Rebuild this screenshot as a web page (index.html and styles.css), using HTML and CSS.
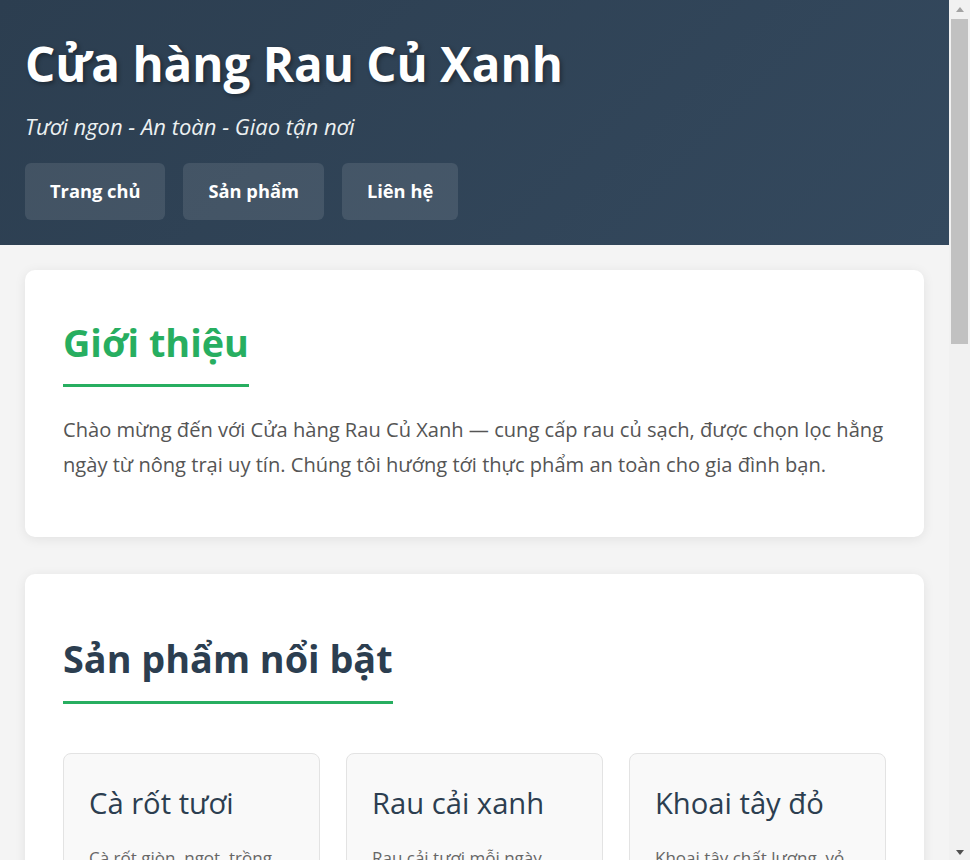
FILE: index.html
```html
<!DOCTYPE html>
<html lang="vi">
<head>
<meta charset="utf-8">
<title>Cửa hàng Rau Củ Xanh</title>
<link rel="stylesheet" href="styles.css">
</head>
<body>
<div class="page">
<header class="site-header">
  <h1 class="site-title">Cửa hàng Rau Củ Xanh</h1>
  <p class="tagline">Tươi ngon - An toàn - Giao tận nơi</p>
  <nav class="nav">
    <a class="nav-link" href="#">Trang chủ</a>
    <a class="nav-link" href="#">Sản phẩm</a>
    <a class="nav-link" href="#">Liên hệ</a>
  </nav>
</header>
<main class="content">
  <section class="card intro">
    <h2 class="section-title green">Giới thiệu</h2>
    <p class="lead">Chào mừng đến với Cửa hàng Rau Củ Xanh — cung cấp rau củ sạch, được chọn lọc hằng ngày từ nông trại uy tín. Chúng tôi hướng tới thực phẩm an toàn cho gia đình bạn.</p>
  </section>
  <section class="card products">
    <h2 class="section-title">Sản phẩm nổi bật</h2>
    <div class="product-grid">
      <article class="product">
        <h3 class="product-name">Cà rốt tươi</h3>
        <p class="product-desc">Cà rốt giòn, ngọt, trồng theo tiêu chuẩn VietGAP, giàu vitamin A.</p>
        <p class="price">25.000đ / kg</p>
        <a class="buy" href="#">Thêm vào giỏ</a>
      </article>
      <article class="product">
        <h3 class="product-name">Rau cải xanh</h3>
        <p class="product-desc">Rau cải tươi mỗi ngày, không thuốc trừ sâu, thu hoạch buổi sáng.</p>
        <p class="price">18.000đ / bó</p>
        <a class="buy" href="#">Thêm vào giỏ</a>
      </article>
      <article class="product">
        <h3 class="product-name">Khoai tây đỏ</h3>
        <p class="product-desc">Khoai tây chất lượng, vỏ mỏng, bở thơm, thích hợp chiên và nấu canh.</p>
        <p class="price">30.000đ / kg</p>
        <a class="buy" href="#">Thêm vào giỏ</a>
      </article>
      <article class="product">
        <h3 class="product-name">Cà chua bi</h3>
        <p class="product-desc">Cà chua bi đỏ mọng, vị chua ngọt tự nhiên, ăn sống hoặc làm salad.</p>
        <p class="price">35.000đ / kg</p>
        <a class="buy" href="#">Thêm vào giỏ</a>
      </article>
      <article class="product">
        <h3 class="product-name">Bắp cải</h3>
        <p class="product-desc">Bắp cải Đà Lạt cuốn chặt, lá giòn, thích hợp luộc, xào và muối dưa.</p>
        <p class="price">20.000đ / kg</p>
        <a class="buy" href="#">Thêm vào giỏ</a>
      </article>
      <article class="product">
        <h3 class="product-name">Dưa leo</h3>
        <p class="product-desc">Dưa leo xanh mát, giòn ngọt, được thu hái trong ngày từ nông trại.</p>
        <p class="price">15.000đ / kg</p>
        <a class="buy" href="#">Thêm vào giỏ</a>
      </article>
    </div>
  </section>
  <section class="card contact">
    <h2 class="section-title green">Liên hệ</h2>
    <p class="lead">Địa chỉ: 123 Đường Nông Sản, Quận 1, TP. Hồ Chí Minh</p>
    <p class="lead">Điện thoại: 0901 234 567</p>
    <p class="lead">Email: lienhe@raucuxanh.vn</p>
  </section>
</main>
<footer class="site-footer">
  <p>© 2024 Cửa hàng Rau Củ Xanh. Bảo lưu mọi quyền.</p>
</footer>
</div>
<div class="scrollbar" aria-hidden="true">
  <span class="sb-btn"><span class="sb-arrow up"></span></span>
  <span class="sb-thumb"></span>
  <span class="sb-space"></span>
  <span class="sb-btn"><span class="sb-arrow down"></span></span>
</div>
</body>
</html>
```
FILE: styles.css
```css
* { box-sizing: border-box; }
body {
  margin: 0;
  background: #f4f4f4;
  font-family: "Open Sans", "Noto Sans", sans-serif;
  color: #333;
}
.page {
  margin-right: 21px;
}
.scrollbar {
  position: fixed;
  top: 0;
  right: 0;
  width: 21px;
  height: 100vh;
  background: #f1f1f1;
  display: flex;
  flex-direction: column;
  align-items: center;
  z-index: 10;
}
.sb-btn {
  height: 19px;
  width: 21px;
  display: flex;
  align-items: center;
  justify-content: center;
  flex: none;
}
.sb-arrow {
  width: 0;
  height: 0;
  border-left: 4.5px solid transparent;
  border-right: 4.5px solid transparent;
}
.sb-arrow.up { border-bottom: 5px solid #a3a3a3; margin-top: -1px; }
.sb-arrow.down { border-top: 5px solid #505050; margin-top: 3px; }
.sb-thumb {
  width: 17px;
  height: 325px;
  background: #c1c1c1;
  flex: none;
}
.sb-space { flex: 1; }
.site-header {
  background: linear-gradient(135deg, #2c3e50 0%, #34495e 100%);
  color: #fff;
  padding: 32px 25px 25px;
}
.site-title {
  margin: 0;
  font-size: 47.5px;
  line-height: 64px;
  font-weight: 700;
  text-shadow: 2px 2px 4px rgba(0,0,0,0.35);
}
.tagline {
  margin: 16px 0 0;
  font-size: 22px;
  line-height: 28px;
  font-style: italic;
  color: #ecf0f1;
}
.nav {
  display: flex;
  gap: 18px;
  margin-top: 23px;
}
.nav-link {
  display: block;
  padding: 16px 25px 17px;
  background: rgba(255,255,255,0.1);
  border-radius: 6px;
  color: #fff;
  text-decoration: none;
  font-weight: 700;
  font-size: 18.3px;
  line-height: 24px;
}
.content {
  padding: 25px;
}
.card {
  background: #fff;
  border-radius: 10px;
  box-shadow: 0 2px 12px rgba(0,0,0,0.08);
  padding: 38px;
  margin-bottom: 37px;
}
.section-title {
  display: inline-block;
  margin: 9px 0 0;
  padding-bottom: 15px;
  border-bottom: 3px solid #27ae60;
  font-size: 37.8px;
  line-height: 52px;
  font-weight: 700;
  color: #2c3e50;
}
.section-title.green { color: #27ae60; }
.products .section-title { margin-top: 21px; padding-bottom: 16px; }
.lead {
  margin: 25px 0 17px;
  font-size: 20.1px;
  line-height: 35px;
  color: #555;
}
.contact .lead { margin: 12px 0; }
.contact .section-title { margin-bottom: 12px; }
.product-grid {
  display: grid;
  grid-template-columns: repeat(3, 1fr);
  gap: 26px;
  margin-top: 49px;
}
.product {
  background: #f9f9f9;
  border: 1px solid #e3e3e3;
  border-radius: 8px;
  padding: 25px;
}
.product-name {
  margin: 4px 0 0;
  font-size: 29.2px;
  line-height: 40px;
  font-weight: 500;
  color: #2c3e50;
}
.product-desc {
  margin: 21px 0 16px;
  font-size: 17px;
  line-height: 27px;
  color: #666;
}
.price {
  margin: 0 0 20px;
  font-size: 22px;
  font-weight: 700;
  color: #27ae60;
}
.buy {
  display: inline-block;
  padding: 12px 22px;
  background: #27ae60;
  color: #fff;
  border-radius: 6px;
  text-decoration: none;
  font-weight: 600;
  font-size: 17px;
}
.site-footer {
  background: #2c3e50;
  color: #ecf0f1;
  text-align: center;
  padding: 30px 25px;
  font-size: 16px;
}
.site-footer p { margin: 0; }
```
